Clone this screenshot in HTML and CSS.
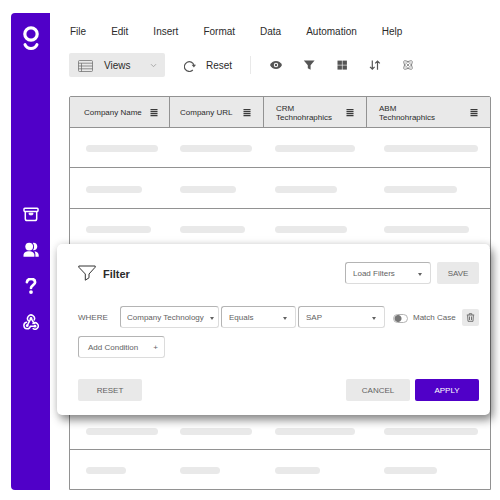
FILE: index.html
```html
<!DOCTYPE html>
<html lang="en">
<head>
  <meta charset="UTF-8" />
  <meta name="viewport" content="width=device-width, initial-scale=1.0" />
  <title>Companies</title>
  <link rel="stylesheet" href="styles.css">
</head>
<body>
  <svg class="sprite" aria-hidden="true">
    <symbol id="stack" viewBox="0 0 8 8">
      <g fill="#3a3a3a">
        <rect x=".4" y="0" width="7.200" height="1.300" rx=".5" />
        <rect x=".4" y="2" width="7.200" height="1.300" rx=".5" />
        <rect x=".4" y="4" width="7.200" height="1.300" rx=".5" />
        <rect x=".4" y="6" width="7.200" height="1.300" rx=".5" />
      </g>
    </symbol>
  </svg>

  <div class="app">
    <aside class="sidebar">
      <svg class="logo" viewBox="0 0 16 25">
        <circle cx="8" cy="8" r="6.200" fill="none" stroke="#fff" stroke-width="3.200" />
        <path d="M2 18.600C3.200 21.400 5.500 22.500 8 22.500s4.800-1.100 6-3.900" fill="none" stroke="#fff" stroke-width="3" stroke-linecap="round" />
      </svg>
      <nav class="side-nav">
        <a href="#" aria-label="Archive">
          <svg viewBox="0 0 16 16" fill="none" stroke="#fff" stroke-width="1.500" stroke-linejoin="round">
            <rect x="1" y="2.200" width="14" height="3.200" rx=".8" />
            <path d="M2.300 5.400v7.300q0 1.800 1.800 1.800h7.800q1.800 0 1.800-1.800V5.400" />
            <path d="M6.100 7.200h3.800v.8q0 .8-.8.8H6.900q-.8 0-.8-.8z" fill="#fff" stroke-width="1" />
          </svg>
        </a>
        <a href="#" aria-label="Users">
          <svg viewBox="0 0 16 16" fill="#fff">
            <circle cx="6.200" cy="4.600" r="3.900" />
            <path d="M.5 14.800v-1.700C.5 10.600 3 9.200 6 9.200s5.400 1.400 5.400 3.900v1.700z" />
            <path d="M9.800.9c2.700-.4 4.500 1.400 4.500 3.700s-1.900 4.100-4.400 3.700c1.600-2 1.600-5.200-.1-7.400z" />
            <path d="M11.400 9.300c2.600.4 4.300 1.700 4.300 3.800v1.700h-3.300v-1.900c0-1.500-.4-2.600-1-3.600z" />
          </svg>
        </a>
        <a href="#" aria-label="Help">
          <svg viewBox="0 0 16 16">
            <path d="M3.900 4.200C4.200 1.600 6 .9 8 .9c2.400 0 4.100 1.300 4.100 3.300 0 2.900-4.100 2.900-4.100 5.800" fill="none" stroke="#fff" stroke-width="2.700" stroke-linecap="round" />
            <circle cx="8" cy="14.100" r="1.900" fill="#fff" />
          </svg>
        </a>
        <a href="#" aria-label="Webhooks">
          <svg viewBox="0 0 16 16" fill="none" stroke-linecap="round" stroke-linejoin="round">
            <g stroke="#fff" stroke-width="1.500">
              <path d="M5.400 6.800a3.500 3.500 0 1 1 5.800-.8" />
              <path d="M7.800 4.600 4.600 10.800" />
              <path d="M8.200 4.600l3 4.900" />
              <path d="M3.500 8.300a3.300 3.300 0 1 0 3.900 4h4.200" />
              <path d="M10 9.500a3.200 3.200 0 1 1 .2 5.100" />
            </g>
            <g fill="#fff">
              <circle cx="8" cy="4.500" r="1.400" />
              <circle cx="4.200" cy="11.700" r="1.400" />
              <circle cx="12" cy="12.200" r="1.400" />
            </g>
          </svg>
        </a>
      </nav>
    </aside>

    <main class="main">
      <nav class="menu">
        <a href="#">File</a>
        <a href="#">Edit</a>
        <a href="#">Insert</a>
        <a href="#">Format</a>
        <a href="#">Data</a>
        <a href="#">Automation</a>
        <a href="#">Help</a>
      </nav>

      <div class="toolbar">
        <button class="views">
          <svg class="views-icon" viewBox="0 0 15 12" fill="none" stroke="#666" stroke-width=".7">
            <rect x=".5" y=".5" width="14" height="11" rx="1" />
            <path d="M.5 3.200h14M.5 6h14M.5 8.800h14M3.500 3.200v8.300" />
          </svg>
          <span>Views</span>
          <svg class="chevron" viewBox="0 0 7 7" fill="none" stroke="#999" stroke-width=".8"><path d="M1 2.200l2.500 2.500L6 2.200" /></svg>
        </button>
        <button class="reload">
          <svg viewBox="0 0 12 12">
            <path d="M8.800 10A4.900 4.900 0 1 1 10 5.200" fill="none" stroke="#555" stroke-width="1.200" />
            <path d="M7.600 4.800H12L9.900 7.400z" fill="#555" />
          </svg>
          <span>Reset</span>
        </button>
        <div class="tools">
          <button aria-label="Visibility">
            <svg viewBox="0 0 12 12"><path d="M0 6C1.200 3.500 3.400 2 6 2s4.800 1.500 6 4c-1.200 2.500-3.400 4-6 4S1.200 8.500 0 6z" fill="#555" /><circle cx="6" cy="6" r="2.200" fill="#fff" /><circle cx="6" cy="6" r="1.200" fill="#555" /></svg>
          </button>
          <button aria-label="Filter">
            <svg viewBox="0 0 12 12"><path d="M.8 1.500h10.800L7.600 6.300v4.500L4.800 9.200V6.300z" fill="#555" /></svg>
          </button>
          <button aria-label="Grid">
            <svg viewBox="0 0 12 12" fill="#555"><rect x="1.500" y="1.600" width="4.400" height="4.200" /><rect x="6.500" y="1.600" width="4.400" height="4.200" /><rect x="1.500" y="6.400" width="4.400" height="4.200" /><rect x="6.500" y="6.400" width="4.400" height="4.200" /></svg>
          </button>
          <button aria-label="Sort">
            <svg viewBox="0 0 12 12" fill="none" stroke="#555" stroke-width="1.200"><path d="M3.300 1.500v8.700M1 7.900l2.300 2.300 2.300-2.300M8.500 10.700V2M6.200 4.300L8.500 2l2.300 2.300" /></svg>
          </button>
          <button aria-label="Integrations">
            <svg viewBox="0 0 12 12" fill="none" stroke="#666" stroke-width=".6">
              <ellipse cx="6" cy="6" rx="5.700" ry="2.500" transform="rotate(45 6 6)" />
              <ellipse cx="6" cy="6" rx="5.700" ry="2.500" transform="rotate(-45 6 6)" />
              <circle cx="6" cy="6" r="3.900" stroke-width=".3" />
              <circle cx="6" cy="6" r=".7" fill="#666" />
            </svg>
          </button>
        </div>
      </div>

      <div class="table-wrap">
        <table class="grid">
          <colgroup>
            <col class="col-name" />
            <col class="col-url" />
            <col class="col-crm" />
            <col />
          </colgroup>
          <thead>
            <tr>
              <th><div class="head">Company Name <svg><use href="#stack" /></svg></div></th>
              <th><div class="head">Company URL <svg><use href="#stack" /></svg></div></th>
              <th><div class="head">CRM<br />Technohraphics <svg><use href="#stack" /></svg></div></th>
              <th><div class="head">ABM<br />Technohraphics <svg><use href="#stack" /></svg></div></th>
            </tr>
          </thead>
          <tbody>
            <tr class="w-full"><td><i></i></td><td><i></i></td><td><i></i></td><td><i></i></td></tr>
            <tr class="w-mid"><td><i></i></td><td><i></i></td><td><i></i></td><td><i></i></td></tr>
            <tr class="w-long"><td><i></i></td><td><i></i></td><td><i></i></td><td><i></i></td></tr>
            <tr class="w-full"><td><i></i></td><td><i></i></td><td><i></i></td><td><i></i></td></tr>
            <tr class="w-mid"><td><i></i></td><td><i></i></td><td><i></i></td><td><i></i></td></tr>
            <tr class="w-long"><td><i></i></td><td><i></i></td><td><i></i></td><td><i></i></td></tr>
            <tr class="w-mid"><td><i></i></td><td><i></i></td><td><i></i></td><td><i></i></td></tr>
            <tr class="w-full"><td><i></i></td><td><i></i></td><td><i></i></td><td><i></i></td></tr>
            <tr class="w-short"><td><i></i></td><td><i></i></td><td><i></i></td><td><i></i></td></tr>
          </tbody>
        </table>
      </div>

      <form class="filter" onsubmit="return false">
        <div class="row">
          <svg class="funnel" viewBox="0 0 18 16" fill="none" stroke="#333" stroke-linejoin="round"><path d="M.8 1h16.400v1.200L11 9v3.800l-3.700 2.400V9L.8 2.200z" /></svg>
          <h2>Filter</h2>
          <div class="select load push">
            <select aria-label="Load Filters"><option>Load Filters</option></select>
          </div>
          <button class="btn save">SAVE</button>
        </div>

        <div class="row conditions">
          <span class="where">WHERE</span>
          <div class="select tech">
            <select aria-label="Field"><option>Company Technology</option></select>
          </div>
          <div class="select op">
            <select aria-label="Operator"><option>Equals</option></select>
          </div>
          <div class="select value">
            <select aria-label="Value"><option>SAP</option></select>
          </div>
          <label class="match"><input type="checkbox" /> Match Case</label>
          <button class="trash push" type="button" aria-label="Delete condition">
            <svg viewBox="0 0 9 9" fill="none" stroke="#666" stroke-width=".9"><path d="M.8 2h7.400M3.200 1.900V.7h2.600v1.200M1.600 2.200l.4 6.100h5l.4-6.100M3.500 3.500v3.500M5.500 3.500v3.500" /></svg>
          </button>
        </div>

        <div class="row">
          <button class="add" type="button">Add Condition <span>+</span></button>
        </div>

        <div class="row actions">
          <button class="btn" type="reset">RESET</button>
          <button class="btn push" type="button">CANCEL</button>
          <button class="btn apply">APPLY</button>
        </div>
      </form>
    </main>
  </div>
</body>
</html>
```
FILE: styles.css
```css
:root {
  --brand: #5000c8;
  --grey: #e9e9e9;
  --line: #929292;
  --text: #2b2b2b;
  --muted: #626262;
}

* {
  box-sizing: border-box;
}

body {
  margin: 0;
  background: #fff;
  color: var(--text);
  font-family: "Liberation Sans", Arial, sans-serif;
  font-size: 10px;
  line-height: 12px;
}

a {
  color: inherit;
  text-decoration: none;
}

button,
select {
  font: inherit;
  color: inherit;
  border: none;
  padding: 0;
  background: none;
  cursor: pointer;
}

.sprite {
  position: absolute;
  width: 0;
  height: 0;
}

.app {
  display: flex;
  padding: 13px 9px 10px 11px;
}

/* sidebar */
.sidebar {
  flex: none;
  display: flex;
  flex-direction: column;
  align-items: center;
  width: 39px;
  padding-top: 13px;
  background: var(--brand);
  border-radius: 4px 0 0 4px;
}

.logo {
  width: 16px;
  height: 25px;
}

.side-nav {
  display: flex;
  flex-direction: column;
  gap: 20px;
  margin-top: 155px;
}

.side-nav svg {
  display: block;
  width: 16px;
  height: 16px;
}

/* menu and toolbar */
.main {
  flex: 1;
  position: relative;
  min-width: 0;
  padding-left: 19px;
}

.menu {
  display: flex;
  gap: 25px;
  padding: 13px 1px 0;
}

.toolbar {
  display: flex;
  align-items: center;
  margin: 15px 0 19px;
}

.views {
  display: flex;
  align-items: center;
  width: 96px;
  height: 24px;
  padding: 1px 8px 0 9px;
  background: var(--grey);
  border-radius: 2px;
}

.views-icon {
  width: 15px;
  height: 12px;
  margin-right: 11px;
}

.chevron {
  width: 7px;
  height: 7px;
  margin-left: auto;
}

.reload {
  display: flex;
  align-items: center;
  gap: 10px;
  margin-left: 19px;
  padding-top: 1px;
}

.reload svg,
.tools svg {
  display: block;
  width: 12px;
  height: 12px;
}

.tools {
  display: flex;
  gap: 21px;
  margin-left: 18px;
  padding: 3px 0 3px 19px;
  border-left: 1px solid var(--grey);
}

/* table */
.table-wrap {
  border: 1px solid var(--line);
  border-radius: 2px 2px 0 0;
  overflow: hidden;
}

.grid {
  width: 100%;
  table-layout: fixed;
  border-spacing: 0;
}

.col-name { width: 100px; }
.col-url { width: 94px; }
.col-crm { width: 103px; }

.grid th {
  height: 31px;
  padding: 1px 12px 0;
  background: var(--grey);
  border-bottom: 1px solid var(--line);
  border-right: 1px solid var(--line);
  font-size: 8px;
  line-height: 9px;
  font-weight: normal;
  text-align: left;
}

.grid th:first-child { padding: 1px 11px 0 14px; }
.grid th:nth-child(2) { padding-left: 10px; }

.grid th:last-child {
  border-right: none;
}

.head {
  position: relative;
  padding-right: 8px;
  white-space: nowrap;
}

.head svg {
  position: absolute;
  top: 50%;
  right: 0;
  width: 8px;
  height: 8px;
  margin-top: -4px;
}

.grid td {
  height: 40px;
  padding: 2px 12px 0 11px;
  border-bottom: 1px solid var(--line);
}

.grid td:first-child { padding-left: 16px; }
.grid td:nth-child(2) { padding-left: 10px; }
.grid td:last-child { padding-left: 17px; }

.grid tr:nth-child(even) td {
  height: 41px;
}

.grid tr:nth-child(n + 8) td {
  height: 39px;
}

.grid tr:last-child td {
  border-bottom: none;
}

.grid i {
  display: block;
  height: 7px;
  border-radius: 4px;
  background: var(--grey);
}

.w-mid i { width: 78%; }
.w-long i { width: 90%; }
.w-short i { width: 56%; }

/* filter panel, floats over the table */
.filter {
  position: absolute;
  top: 231px;
  left: 7px;
  right: 1px;
  padding: 18px 11px 14px 21px;
  background: #fff;
  border-radius: 5px;
  box-shadow: 3px 5px 10px rgba(0, 0, 0, 0.45), 0 0 8px rgba(0, 0, 0, 0.1);
  color: var(--muted);
  font-size: 8px;
  line-height: 10px;
}

.row {
  display: flex;
  align-items: center;
}

.conditions {
  margin: 22px 0 8px;
}

.actions {
  gap: 5px;
  margin-top: 21px;
}

.push {
  margin-left: auto;
}

.funnel {
  width: 18px;
  height: 16px;
  margin-right: 7px;
}

.filter h2 {
  margin: 0;
  padding-top: 2px;
  color: var(--text);
  font-size: 11px;
  line-height: 12px;
}

.select {
  position: relative;
  height: 22px;
}

.select select,
.add {
  width: 100%;
  height: 22px;
  padding: 2px 7px 0;
  appearance: none;
  border: 1px solid #dcdcdc;
  border-top-color: #b4b4b4;
  border-left-color: #b4b4b4;
  border-radius: 3px;
  text-align: left;
}

.select::after {
  content: "";
  position: absolute;
  top: 11px;
  right: 9px;
  border: 2px solid transparent;
  border-top: 3px solid var(--muted);
  border-bottom: none;
  pointer-events: none;
}

.load { width: 86px; }
.tech { width: 99px; }
.tech select { padding: 2px 6px 0; }
.tech::after { right: 5px; }
.op { width: 75px; margin: 0 2px; }
.value { width: 87px; }

.where {
  width: 42px;
  padding-top: 2px;
}

.match {
  display: flex;
  align-items: center;
  gap: 5px;
  margin-left: 8px;
  padding-top: 2px;
}

.match input {
  appearance: none;
  width: 15px;
  height: 9px;
  margin: 0;
  border: 1px solid #b4b4b4;
  border-radius: 5px;
  background: radial-gradient(circle at 4px 50%, #777 3px, transparent 4px);
}

.match input:checked {
  background: radial-gradient(circle at 9px 50%, var(--brand) 3px, transparent 4px);
}

.trash {
  width: 17px;
  height: 17px;
  background: var(--grey);
  border-radius: 2px;
}

.trash svg {
  display: block;
  width: 9px;
  height: 9px;
  margin: 0 auto;
}

.add {
  display: flex;
  align-items: center;
  justify-content: space-between;
  width: 87px;
  padding: 2px 6px 0 9px;
}

.btn {
  width: 64px;
  height: 22px;
  padding-top: 2px;
  background: var(--grey);
  border-radius: 2px;
}

.save {
  width: 42px;
  margin-left: 6px;
}

.apply {
  background: var(--brand);
  color: #fff;
}
```
